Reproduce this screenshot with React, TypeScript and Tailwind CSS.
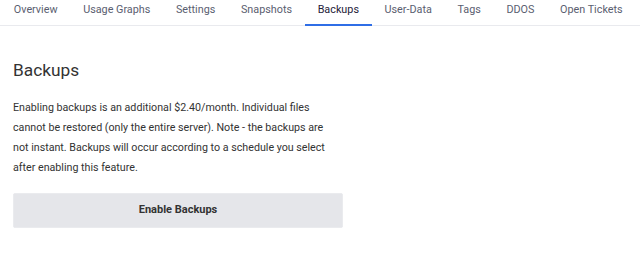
const tabs = [
  "Overview",
  "Usage Graphs",
  "Settings",
  "Snapshots",
  "Backups",
  "User-Data",
  "Tags",
  "DDOS",
  "Open Tickets",
];

export default function App() {
  return (
    <div className="w-[640px] h-[254px] bg-white font-['Roboto',sans-serif] overflow-hidden">
      <nav className="flex border-b border-[#e9eaee] pl-px">
        {tabs.map((t) => {
          const active = t === "Backups";
          return (
            <div
              key={t}
              className={
                active
                  ? "shrink-0 whitespace-nowrap px-[12.8px] pt-[2px] pb-[6px] text-[10.8px] leading-[16px] text-[#1e2139] border-b-2 border-[#2f6ee6] -mb-px"
                  : "shrink-0 whitespace-nowrap px-[12.8px] pt-[2px] pb-[6px] text-[10.8px] leading-[16px] text-[#5a5e70] border-b-2 border-transparent -mb-px"
              }
            >
              {t}
            </div>
          );
        })}
      </nav>
      <div className="px-[13px] pt-[32px]">
        <h2 className="text-[17.3px] text-[#333] leading-[24px]">Backups</h2>
        <p className="mt-[16px] w-[320px] text-[10.7px] leading-[20px] text-[#333]">
          Enabling backups is an additional $2.40/month. Individual files
          cannot be restored (only the entire server). Note - the backups are
          not instant. Backups will occur according to a schedule you select
          after enabling this feature.
        </p>
        <button className="mt-[15px] w-[330px] h-[35px] rounded-[2px] bg-[#e5e6ea] border border-[#eaebee] text-[11px] font-bold text-[#333]">
          Enable Backups
        </button>
      </div>
    </div>
  );
}
